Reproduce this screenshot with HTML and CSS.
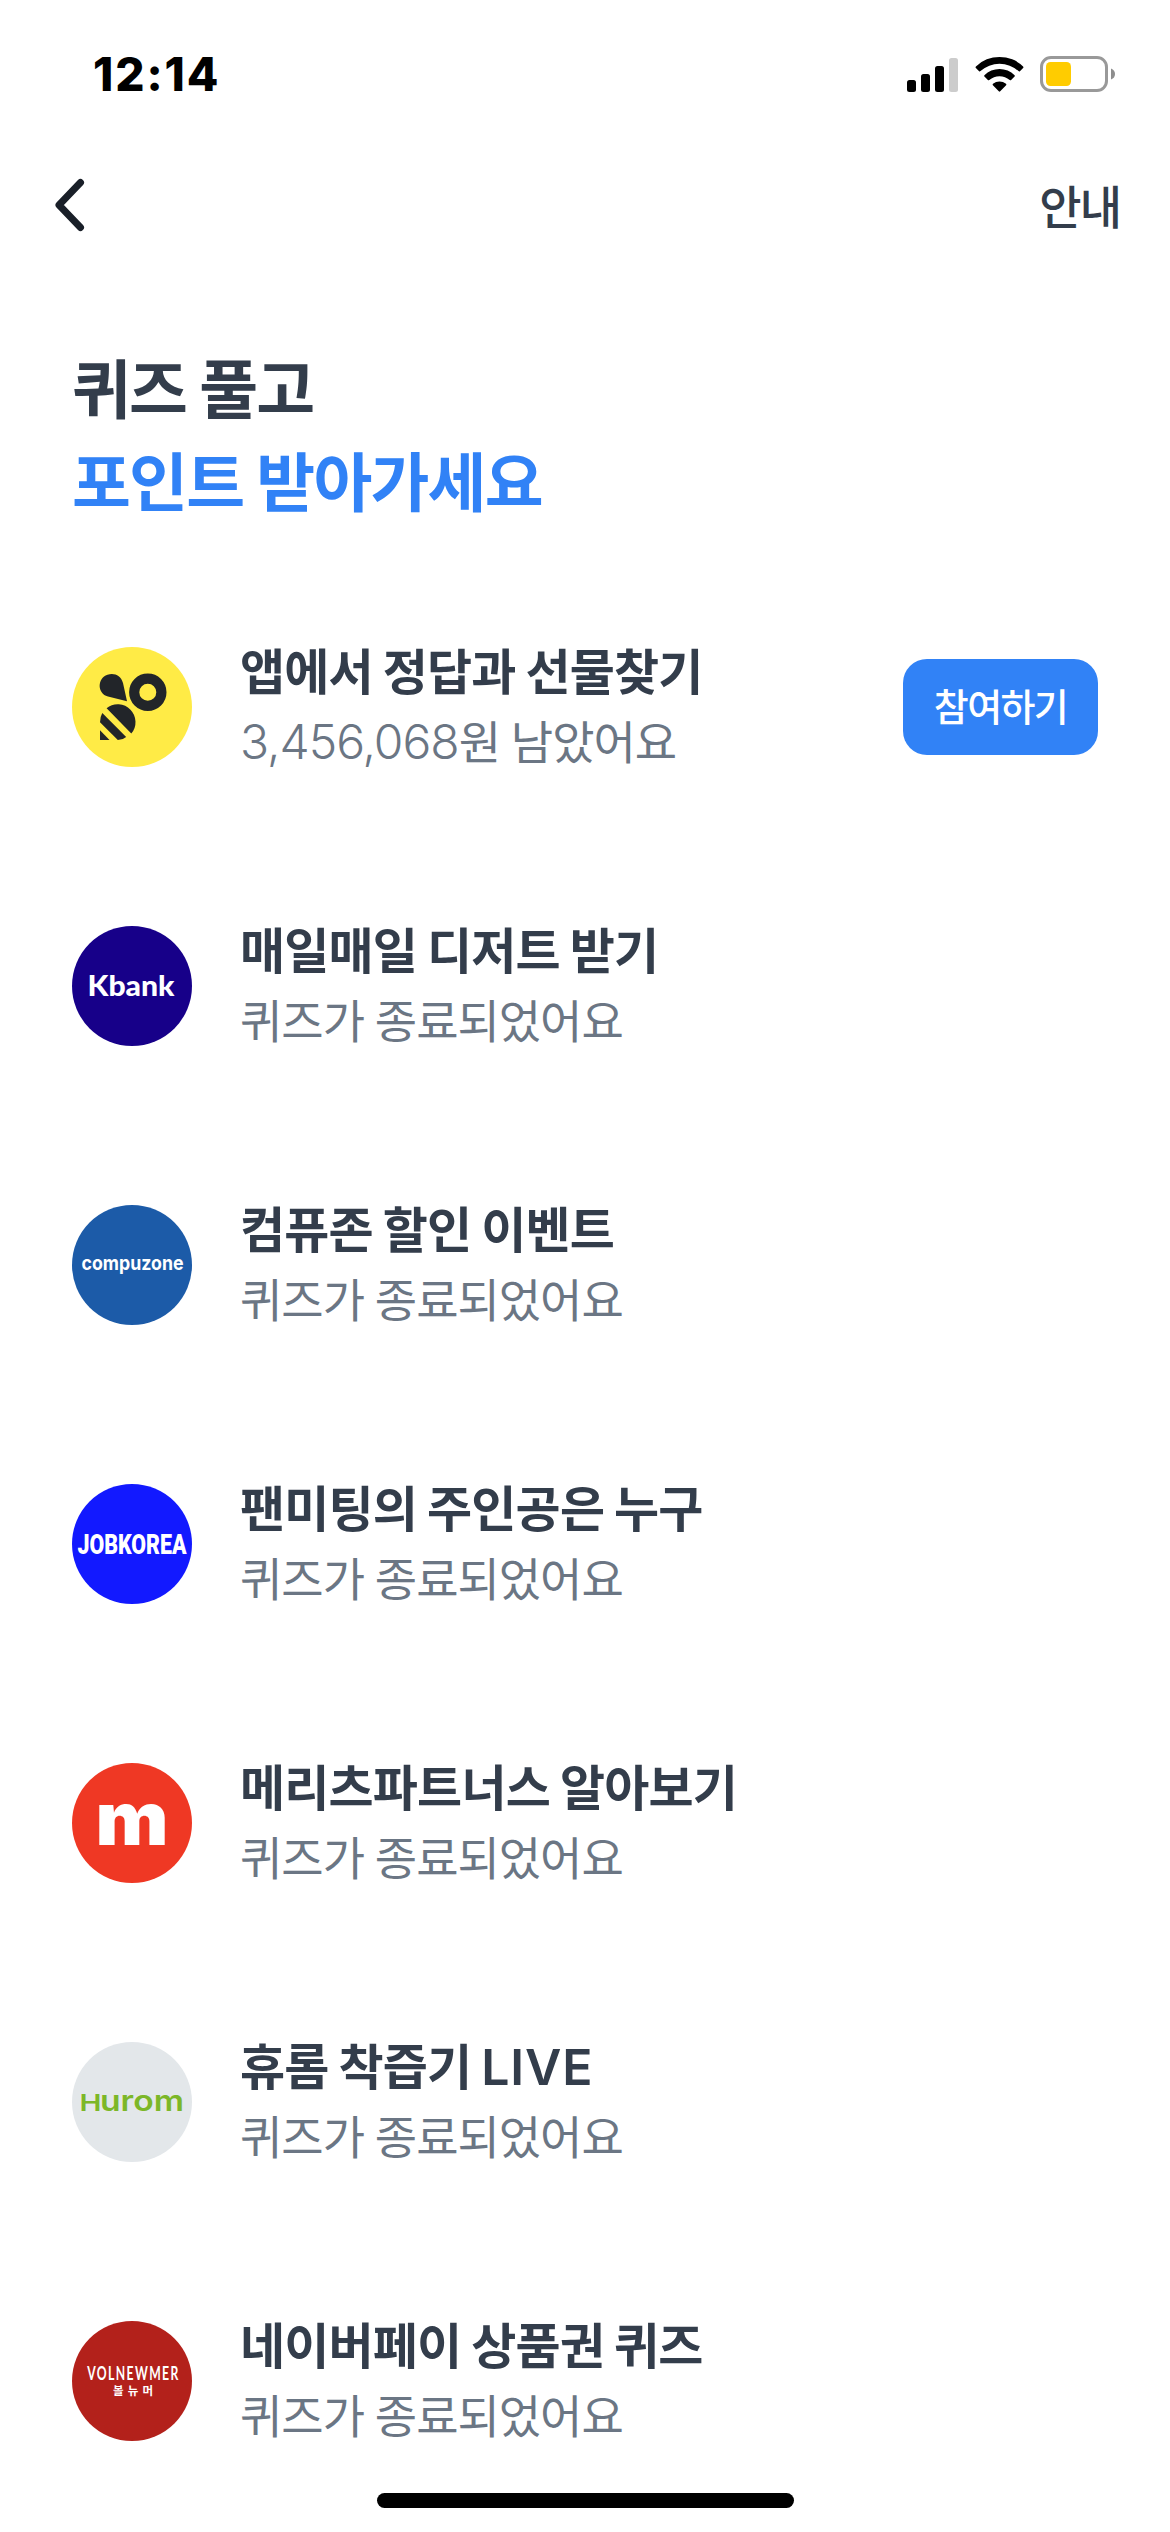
FILE: index.html
```html
<!DOCTYPE html>
<html lang="ko">
<head>
<meta charset="utf-8">
<title>퀴즈 풀고 포인트 받아가세요</title>
<link rel="stylesheet" href="styles.css">
</head>
<body>
<div class="screen">
  <header class="status">
    <span class="time">12:14</span>
    <div class="indicators">
      <svg class="signal" width="51" height="36" viewBox="0 0 51 36">
        <rect x="0" y="24" width="9" height="12" rx="2.5"/>
        <rect x="14" y="18" width="9" height="18" rx="2.5"/>
        <rect x="28" y="10" width="9" height="26" rx="2.5"/>
        <rect x="42" y="2" width="9" height="34" rx="2.5" fill="#ccc"/>
      </svg>
      <svg class="wifi" width="49" height="36" viewBox="0 0 48 36">
        <path d="M0.4 10.4A34 34 0 0 1 47.6 10.4Q48.3 11.2 47.6 12L44.4 15.2Q43.8 15.8 43 15.1A28.5 28.5 0 0 0 5 15.1Q4.2 15.8 3.6 15.2L.4 12Q-.3 11.2 .4 10.4Z"/>
        <path d="M8.9 19.2A21.5 21.5 0 0 1 39.1 19.2Q39.7 19.9 39.1 20.6L35.6 24Q35 24.6 34.2 24A15.5 15.5 0 0 0 13.8 24Q13 24.6 12.4 24L8.9 20.6Q8.3 19.9 8.9 19.2Z"/>
        <path d="M17.5 27.8A10.2 10.2 0 0 1 30.5 27.8Q31.3 28.5 30.6 29.2L24.7 35.3Q24 36 23.3 35.3L17.4 29.2Q16.7 28.5 17.5 27.8Z"/>
      </svg>
      <svg class="battery" width="75" height="36" viewBox="0 0 75 36">
        <rect x="1.5" y="1.5" width="65" height="33" rx="9.5" fill="none" stroke="#999" stroke-width="3"/>
        <rect x="6" y="6" width="25" height="24" rx="4.5" fill="#fc0"/>
        <path d="M71 12.5Q75 14 75 18T71 23.5Z" fill="#8e8e8e"/>
      </svg>
    </div>
  </header>

  <nav class="nav">
    <svg width="32" height="54" viewBox="0 0 32 54"><path d="M26.5 4.5L5 27L26.5 49.5" fill="none" stroke="#191f28" stroke-width="7" stroke-linecap="round" stroke-linejoin="round"/></svg>
    <span class="guide">안내</span>
  </nav>

  <h1 class="headline">퀴즈 풀고<br><span class="accent">포인트 받아가세요</span></h1>

  <ul class="list">
    <li class="item">
      <svg class="logo" viewBox="0 0 120 120"><circle cx="60" cy="60" r="60" fill="#ffeb46"/>
        <g fill="#222529">
          <circle cx="75.8" cy="45.3" r="13.6" fill="none" stroke="#222529" stroke-width="10.2"/>
          <path d="M55 54.3L36 49.6C25 46.5 25 31.5 35.5 27.8C42 25.5 49 28.5 51 36Z"/>
          <path d="M34.6 61.2A17.8 17.8 0 0 1 59.3 86.6Z"/>
          <path d="M30.3 66L54.2 89.9Q51 92.8 45.8 93L28 75.3Q28 70 30.3 66Z"/>
          <path d="M28 83.3L37.5 93H28Z"/>
        </g>
      </svg>
      <div class="info"><p class="title">앱에서 정답과 선물찾기</p><p class="desc"><span class="amount">3,456,068</span>원 남았어요</p></div>
      <button class="join">참여하기</button>
    </li>
    <li class="item">
      <svg class="logo" viewBox="0 0 120 120"><circle cx="60" cy="60" r="60" fill="#170089"/>
        <text class="t-kbank" x="15.5" y="69.5" textLength="87" lengthAdjust="spacingAndGlyphs">Kbank</text></svg>
      <div class="info"><p class="title">매일매일 디저트 받기</p><p class="desc">퀴즈가 종료되었어요</p></div>
    </li>
    <li class="item">
      <svg class="logo" viewBox="0 0 120 120"><circle cx="60" cy="60" r="60" fill="#1c5ba8"/>
        <text class="t-compu" x="9.5" y="65" textLength="102" lengthAdjust="spacingAndGlyphs">compuzone</text></svg>
      <div class="info"><p class="title">컴퓨존 할인 이벤트</p><p class="desc">퀴즈가 종료되었어요</p></div>
    </li>
    <li class="item">
      <svg class="logo" viewBox="0 0 120 120"><circle cx="60" cy="60" r="60" fill="#1219ff"/>
        <text class="t-job" x="5.5" y="69.5" textLength="109" lengthAdjust="spacingAndGlyphs">JOBKOREA</text></svg>
      <div class="info"><p class="title">팬미팅의 주인공은 누구</p><p class="desc">퀴즈가 종료되었어요</p></div>
    </li>
    <li class="item">
      <svg class="logo" viewBox="0 0 120 120"><circle cx="60" cy="60" r="60" fill="#ef3824"/>
        <text class="t-m" x="23.5" y="81.5" textLength="73" lengthAdjust="spacingAndGlyphs">m</text></svg>
      <div class="info"><p class="title">메리츠파트너스 알아보기</p><p class="desc">퀴즈가 종료되었어요</p></div>
    </li>
    <li class="item">
      <svg class="logo" viewBox="0 0 120 120"><circle cx="60" cy="60" r="60" fill="#e3e7ea"/>
        <text class="t-hurom-cap" x="7.5" y="69" textLength="22" lengthAdjust="spacingAndGlyphs">H</text>
        <text class="t-hurom" x="28" y="69" textLength="84" lengthAdjust="spacingAndGlyphs">urom</text></svg>
      <div class="info"><p class="title">휴롬 착즙기 <span class="latin">LIVE</span></p><p class="desc">퀴즈가 종료되었어요</p></div>
    </li>
    <li class="item">
      <svg class="logo" viewBox="0 0 120 120"><circle cx="60" cy="60" r="60" fill="#b3211b"/>
        <text class="t-vol" transform="translate(15.3 59.3) scale(.66 1)" x="0" y="0" textLength="138">VOLNEWMER</text>
        <text class="t-vol-ko" x="41" y="73.5" textLength="40">볼뉴머</text></svg>
      <div class="info"><p class="title">네이버페이 상품권 퀴즈</p><p class="desc">퀴즈가 종료되었어요</p></div>
    </li>
  </ul>
  <div class="home-bar"></div>
</div>
</body>
</html>
```
FILE: styles.css
```css
* { box-sizing: border-box; margin: 0; padding: 0; }
body {
  background: #fff;
  font-family: "Noto Sans CJK KR", "Noto Sans", sans-serif;
  color: #333d4b;
}
.screen {
  position: relative;
  display: flex;
  flex-direction: column;
  width: 1170px;
  height: 2532px;
  overflow: hidden;
}
.status {
  display: flex;
  justify-content: space-between;
  align-items: center;
  height: 148px;
  padding: 0 55px 0 93px;
}
.time {
  font: 800 46px/60px "Inter", sans-serif;
  letter-spacing: 1.9px;
  color: #000;
}
.indicators { display: flex; gap: 16px; }
.signal { margin-right: 1px; }
.nav {
  display: flex;
  justify-content: space-between;
  align-items: center;
  height: 114px;
  padding: 0 50px 0 54px;
}
.guide {
  font-size: 46px;
  line-height: 70px;
  font-weight: 500;
  letter-spacing: -2px;
  padding-bottom: 2px;
}
.headline {
  padding: 77px 72px 0;
  font-size: 64px;
  line-height: 93px;
  font-weight: 700;
  letter-spacing: -1.8px;
  word-spacing: -3px;
  height: 385px;
}
.accent { color: #3182f6; }
.list {
  display: flex;
  flex-direction: column;
  gap: 159px;
  list-style: none;
}
.item {
  display: flex;
  align-items: center;
  height: 120px;
  padding: 0 72px;
}
.logo { width: 120px; height: 120px; flex: none; margin-right: 48px; }
.info { flex: 1; white-space: nowrap; padding-bottom: 7px; }
.title {
  font-size: 49px;
  line-height: 70px;
  font-weight: 700;
  letter-spacing: -0.8px;
  word-spacing: -3px;
}
.title .latin {
  font-family: "Inter", sans-serif;
  font-size: 50px;
  font-weight: 600;
  line-height: 1;
  letter-spacing: 0.8px;
}
.desc {
  font-size: 46px;
  line-height: 70px;
  font-weight: 400;
  letter-spacing: -1px;
  word-spacing: -1px;
  color: #6b7684;
}
.amount {
  font-family: "Inter", sans-serif;
  font-size: 48px;
  font-weight: 350;
  line-height: 1;
  letter-spacing: -1px;
}
.join {
  width: 195px;
  height: 96px;
  padding-bottom: 4px;
  border: 0;
  border-radius: 24px;
  background: #3182f6;
  color: #fff;
  font: 500 38px/90px "Noto Sans CJK KR", sans-serif;
  letter-spacing: -1.6px;
}
.logo text { fill: #fff; font-family: "Inter", sans-serif; }
.logo .t-kbank { font-family: "Lato", sans-serif; font-weight: 900; font-size: 29px; }
.logo .t-compu { font-weight: 700; font-size: 20px; }
.logo .t-job { font-family: "Roboto", sans-serif; font-weight: 900; font-size: 27px; }
.logo .t-m { font-weight: 900; font-size: 74px; }
.logo .t-hurom, .logo .t-hurom-cap { fill: #7cb728; font-weight: 600; font-size: 29px; }
.logo .t-hurom-cap { font-size: 23px; }
.logo .t-vol { font-family: "Lato", sans-serif; font-weight: 700; font-size: 18.5px; }
.logo .t-vol-ko { font-family: "Noto Sans CJK KR", sans-serif; font-weight: 700; font-size: 11.5px; }
.home-bar {
  position: absolute;
  left: 377px;
  bottom: 24px;
  width: 417px;
  height: 15px;
  border-radius: 8px;
  background: #000;
}
```
